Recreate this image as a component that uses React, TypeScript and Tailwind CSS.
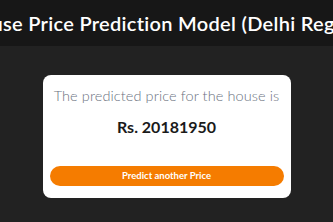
import React from 'react';

const font = { fontFamily: '"Lato", "Open Sans", "Liberation Sans", sans-serif' };

export default function App() {
  return (
    <div className="w-[333px] h-[222px] bg-[#222222] overflow-hidden" style={font}>
      {/* header */}
      <header className="h-[46px] bg-[#171717] flex items-center justify-center overflow-hidden">
        <h1 className="whitespace-nowrap text-[20px] font-semibold text-white tracking-[0.3px] shrink-0">
          House Price Prediction Model (Delhi Region)
        </h1>
      </header>

      <main className="flex justify-center pt-[29px]">
        <div className="w-[248px] h-[123px] bg-white rounded-[8px] flex flex-col items-center px-[7px]">
          <p className="mt-[14px] text-[14.5px] font-light text-[#6b7280] whitespace-nowrap leading-none tracking-[0.1px]">
            The predicted price for the house is
          </p>
          <p className="mt-[15px] text-[16px] font-bold text-[#1a1a1a] leading-none">Rs. 20181950</p>
          <button className="mt-auto mb-[12px] w-full h-[20px] rounded-full bg-[#f57c00] text-white text-[9.5px] font-bold">
            Predict another Price
          </button>
        </div>
      </main>
    </div>
  );
}
